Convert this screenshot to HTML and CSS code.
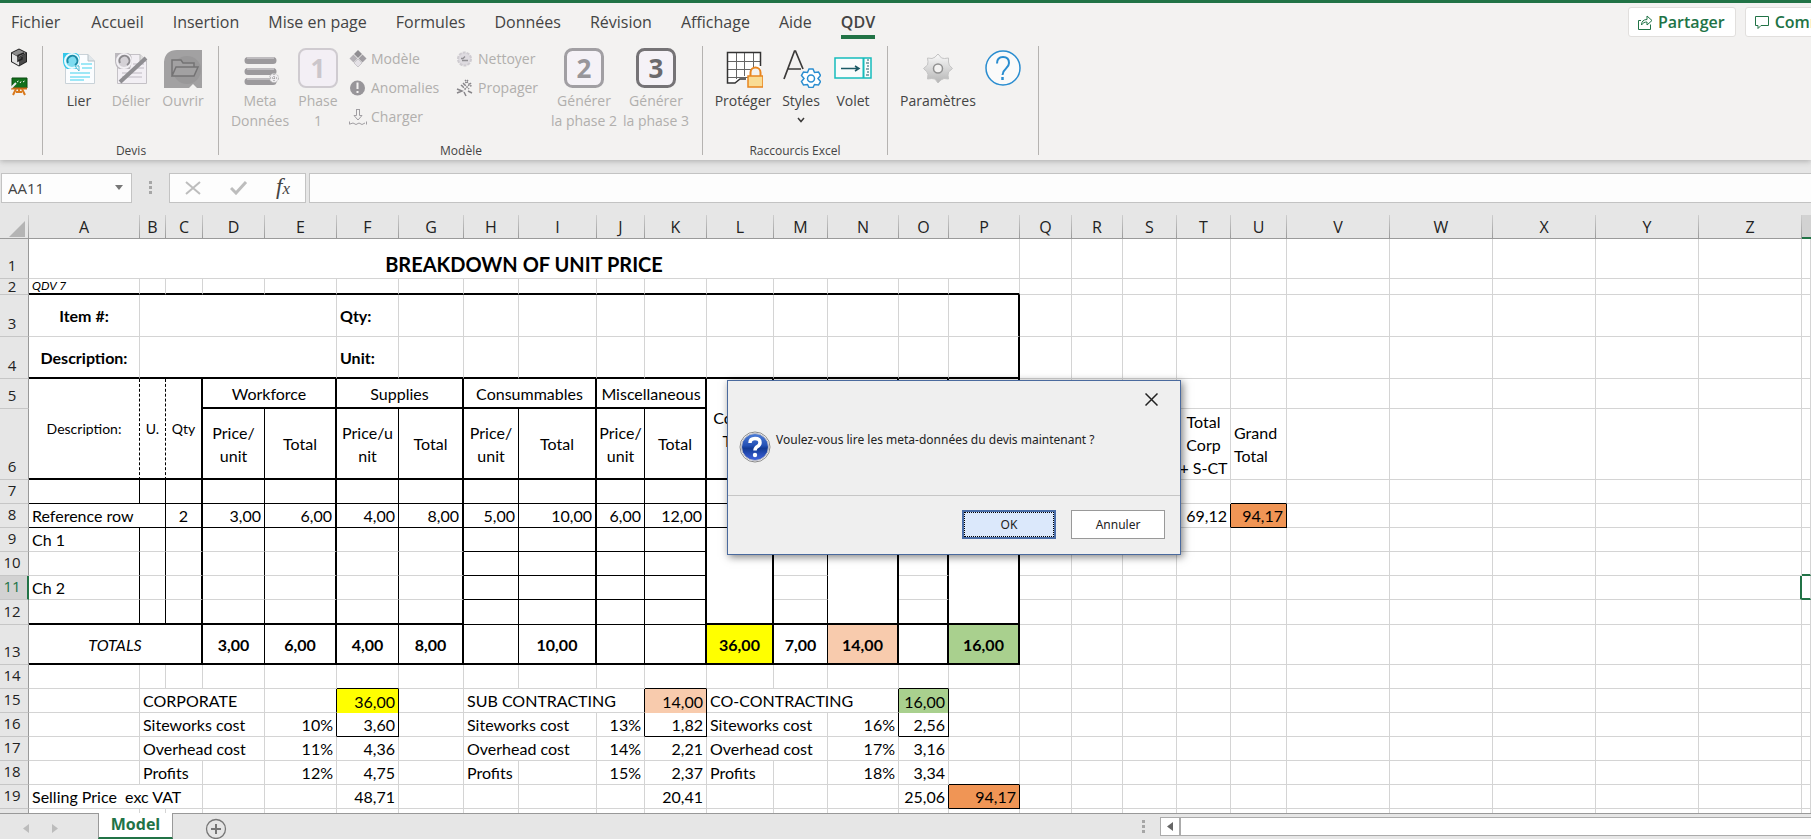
FILE: index.html
```html
<!DOCTYPE html>
<html lang="fr">
  <head>
    <meta charset="UTF-8" />
    <meta name="viewport" content="width=device-width, initial-scale=1.0" />
    <title>QDV - Model</title>
    <link rel="stylesheet" href="styles.css">
  </head>
  <body>
    <header class="ribbon">
      <div class="menu">
        <nav class="tabs">
          <a class="tab tab-file" href="#">Fichier</a>
          <a class="tab" href="#">Accueil</a>
          <a class="tab" href="#">Insertion</a>
          <a class="tab" href="#">Mise en page</a>
          <a class="tab" href="#">Formules</a>
          <a class="tab" href="#">Données</a>
          <a class="tab" href="#">Révision</a>
          <a class="tab" href="#">Affichage</a>
          <a class="tab" href="#">Aide</a>
          <a class="tab active" href="#">QDV</a>
        </nav>
        <div class="share">
          <button type="button" class="share-btn">
            <svg width="16" height="16" viewBox="0 0 16 16" fill="none" stroke="#217346"><path d="M1.500 6.500V15.500H13.500V10.500M1.500 6.500H4M4.500 11C4.500 7.500 6.500 5.500 10 5.500V2L15 6.500L10 11V8C7.500 8 6 8.800 4.500 11Z"/></svg>
            Partager
          </button>
          <button type="button" class="share-btn">
            <svg width="16" height="16" viewBox="0 0 16 16" fill="none" stroke="#217346"><path d="M1.500 2.500H14.500V11.500H7L4 14.500V11.500H1.500Z"/></svg>
            Commentaires
          </button>
        </div>
      </div>

      <div class="groups">
        <div class="group group-quick">
          <button type="button" class="quick" aria-label="Cube">
            <svg width="18" height="19" viewBox="0 0 18 19"><path d="M9 .5L17 4.500V14L9 18.500L1 14V4.500Z" fill="#222"/><path d="M9 1.500L16 5L9 9L2 5Z" fill="#8d8d8d"/><path d="M9 9.500L2 5.500V13.500L9 17.500Z" fill="#e2e2e2"/><path d="M9 9.500L16 5.500V13.500L9 17.500Z" fill="#4a4a4a"/><path d="M14 5L8 7.500V13L12 11V9" fill="none" stroke="#222" stroke-width="1.500"/></svg>
          </button>
          <button type="button" class="quick" aria-label="Tableau">
            <svg width="18" height="19" viewBox="0 0 18 19"><path d="M2 1H17V11H2Z" fill="#12701c" stroke="#0a4a10"/><path d="M1 11.500H17" stroke="#c96a14" stroke-width="2"/><path d="M6 12L3 18M12 12L15 18M9 12V16M6 15H12" stroke="#d9791c" stroke-width="2" fill="none"/><path d="M1 11L6 6" stroke="#eee" stroke-width="2"/><path d="M7 5L8.500 4M10 6L11 4.500M13 5L14.500 4" stroke="#fff"/></svg>
          </button>
        </div>

        <div class="group">
          <div class="items">
            <button type="button" class="big w52">
              <svg width="40" height="40" viewBox="0 0 40 40"><path d="M6.500 6.500H29L35.500 13V35.500H6.500Z" fill="#fbfdff" stroke="#c9d2d8"/><path d="M29 6.500V13H35.500" fill="#dfe6ea" stroke="#b5c0c6"/><path d="M4 5H17Q21 6 21 13L19 21H8Q4 18 4 13Z" fill="#35c8ea"/><circle cx="13" cy="13" r="7" fill="#7edcf0" stroke="#e9fbff" stroke-width="2"/><path d="M9 15a5 5 0 1 1 7 2" fill="none" stroke="#1c8aa5" stroke-width="2"/><path d="M16 18H20V23Z" fill="#fff" stroke="#58bcd2"/><path d="M11 25H31M11 29H31M11 32H25M22 16H33M23 20H33" stroke="#7fe0f4" stroke-width="1.500"/></svg>
              Lier
            </button>
            <button type="button" class="big w52" disabled>
              <svg width="40" height="40" viewBox="0 0 40 40"><path d="M6.500 6.500H29L35.500 13V35.500H6.500Z" fill="#f2eff4" stroke="#c4c1c6"/><path d="M29 6.500V13H35.500" fill="#ddd" stroke="#bbb"/><path d="M4 5H17Q21 6 21 13L19 21H8Q4 18 4 13Z" fill="#bbb8bd"/><circle cx="13" cy="13" r="7" fill="#d4d1d6" stroke="#f2f0f4" stroke-width="2"/><path d="M9 15a5 5 0 1 1 7 2" fill="none" stroke="#8c8a8e" stroke-width="2"/><path d="M11 25H31M11 29H31M22 16H33M23 20H33" stroke="#cfccd2" stroke-width="1.500"/><path d="M9 34L35 10" stroke="#8f8e92" stroke-width="4"/></svg>
              Délier
            </button>
            <button type="button" class="big w52" disabled>
              <svg width="40" height="40" viewBox="0 0 40 40"><path d="M1 14Q2 2 14 2H39V40H34L30 36L26 40H1Z" fill="#a2a1a2"/><circle cx="24" cy="22" r="14" fill="#999899"/><path d="M9 28V12H18L20 15H31V19M9 28L13 19H35L31 28Z" fill="#a2a1a2" stroke="#747374" stroke-width="1.500"/></svg>
              Ouvrir
            </button>
          </div>
          <p class="caption">Devis</p>
        </div>

        <div class="group group-model">
          <div class="items">
            <button type="button" class="big w60" disabled>
              <svg width="40" height="40" viewBox="0 0 40 40"><g stroke="#9c9a9d" stroke-width="7" stroke-linecap="round"><path d="M8 12.500H33M8 23.500H33M8 33.500H33"/></g><g stroke="#bebcbf" stroke-width="2"><path d="M7 10H34M7 21H34M7 31H34"/></g><circle cx="34" cy="30" r="4.500" fill="#f0eef1" stroke="#bbb" stroke-dasharray="2 1"/><path d="M30 30H38M34 26V34" stroke="#888" stroke-dasharray="1 1"/></svg>
              Meta<br>Données
            </button>
            <button type="button" class="big w56" disabled>
              <svg width="40" height="40" viewBox="0 0 40 40"><rect x="1" y="1" width="38" height="38" rx="7" fill="#f3eff5" stroke="#cfcbd0" stroke-width="2"/><text x="20" y="30" class="phase-num" fill="#cbc6cb">1</text></svg>
              Phase<br>1
            </button>
            <div class="smalls smalls-first">
              <button type="button" class="small" disabled>
                <svg width="18" height="18" viewBox="0 0 18 18"><path d="M9 0L13 4L9 8L5 4Z" fill="#908e92"/><path d="M4.500 4.500L8.500 8.500L4.500 12.500L.5 8.500Z" fill="#b4b1b6"/><path d="M13.500 4.500L17.500 8.500L13.500 12.500L9.500 8.500Z" fill="#a09da2"/><path d="M9 9L13 13L9 17L5 13Z" fill="#e4e1e6" stroke="#c9c7cb"/></svg>
                Modèle
              </button>
              <button type="button" class="small" disabled>
                <svg width="18" height="18" viewBox="0 0 18 18"><circle cx="8.500" cy="9" r="7.500" fill="#98969a"/><path d="M8.500 3.500V10M8.500 12V14" stroke="#f3f2f1" stroke-width="2"/></svg>
                Anomalies
              </button>
              <button type="button" class="small" disabled>
                <svg width="18" height="18" viewBox="0 0 18 18" fill="none" stroke="#a09ea2"><path d="M7.500 1V7.500H5L9 12L13 7.500H10.500V1M7.500 1.500H10.500" /><path d="M.5 13.500V16.500M1 16L4 15L7 16.500L10 15L13 16.500L16 15M17.500 13.500V16.500"/></svg>
                Charger
              </button>
            </div>
            <div class="smalls">
              <button type="button" class="small" disabled>
                <svg width="18" height="18" viewBox="0 0 18 18"><circle cx="8.500" cy="9" r="6.500" fill="#dedbe0" stroke="#cfccd1" stroke-width="2" stroke-dasharray="3 1"/><path d="M5 8.500H7L9 6.500M6 10.500H12" stroke="#918f93" stroke-width="1.300" fill="none"/></svg>
                Nettoyer
              </button>
              <button type="button" class="small" disabled>
                <svg width="18" height="18" viewBox="0 0 18 18" fill="none" stroke="#88868a" stroke-width="1.500"><path d="M9 1L16 8M7 4L13 10M5 6L10 11M12 1L6 8M15 4L8 11" stroke-dasharray="1.500 1"/><path d="M1 10L6 12L1 14M8 13L10 17M12 12L16 14"/></svg>
                Propager
              </button>
            </div>
            <button type="button" class="big w72" disabled>
              <svg width="40" height="40" viewBox="0 0 40 40"><rect x="1.500" y="1.500" width="37" height="37" rx="7" fill="#f5f2f7" stroke="#a19fa3" stroke-width="3"/><text x="20" y="30" class="phase-num" fill="#98969a">2</text></svg>
              Générer<br>la phase 2
            </button>
            <button type="button" class="big w72" disabled>
              <svg width="40" height="40" viewBox="0 0 40 40"><rect x="1.500" y="1.500" width="37" height="37" rx="7" fill="#f5f2f7" stroke="#757376" stroke-width="3"/><text x="20" y="30" class="phase-num" fill="#6c6a6d">3</text></svg>
              Générer<br>la phase 3
            </button>
          </div>
          <p class="caption">Modèle</p>
        </div>

        <div class="group group-excel">
          <div class="items">
            <button type="button" class="big w60">
              <svg width="40" height="40" viewBox="0 0 40 40"><path d="M4.500 4.500H37.500V32H22L18 31.500L13 35.500H4.500Z" fill="#fff"/><path d="M13.500 4V31M21.500 4V28M30.500 4V20M4 13.500H37M4 21.500H28M4 29.500H25" stroke="#666"/><path d="M37.500 18V4.500H4.500V35H12L17 31H23" fill="none" stroke="#333" stroke-width="1.500"/><path d="M27.500 28V24.500a5 5 0 0 1 10 0V28" fill="#f3f2f1" stroke="#e8851f" stroke-width="2"/><rect x="25" y="28" width="15" height="11" fill="#f9dc94" stroke="#e8851f" stroke-width="1.500"/></svg>
              Protéger
            </button>
            <button type="button" class="big w56">
              <svg width="40" height="40" viewBox="0 0 40 40" fill="none"><path d="M3 31L13.500 3H14.500L22 21M7 21H20" stroke="#3b3a39" stroke-width="1.700"/><path d="M28 21L32 21L33.500 24.500L37.500 24L39.500 27.500L37 30.500L39.500 33.500L37.500 37L33.500 36.500L32 39.500H28L26.500 36.500L22.500 37L20.500 33.500L23 30.500L20.500 27.500L22.500 24L26.500 24.500Z" fill="#fff" stroke="#2a8dd0" stroke-width="1.500"/><circle cx="30" cy="30.500" r="3.500" stroke="#2a8dd0" stroke-width="1.500"/></svg>
              Styles
              <svg class="chevron" width="8" height="6" viewBox="0 0 8 6" fill="none" stroke="#3b3a39" stroke-width="1.500"><path d="M1 1L4 4.500L7 1"/></svg>
            </button>
            <button type="button" class="big w48">
              <svg width="40" height="40" viewBox="0 0 40 40" fill="none"><rect x="2" y="10" width="36" height="20" fill="#fafcfc" stroke="#16bcbc" stroke-width="1.500"/><path d="M30.500 10V30" stroke="#16bcbc" stroke-width="2"/><path d="M34 12H36M33 15H36M34 18H36M33 21H36M34 24H36M33 27H36" stroke="#1b5a66"/><path d="M8 20.500H25M22 18L26 20.500L22 23" stroke="#1b5a66" stroke-width="1.500"/></svg>
              Volet
            </button>
          </div>
          <p class="caption">Raccourcis Excel</p>
        </div>

        <div class="group group-last">
          <div class="items">
            <button type="button" class="big w76">
              <svg width="40" height="40" viewBox="0 0 40 40"><defs><linearGradient id="gear" x1="0" y1="0" x2="0" y2="1"><stop offset="0" stop-color="#fafafa"/><stop offset="1" stop-color="#b5b5b5"/></linearGradient></defs><path d="M20 6L23.500 10Q26 11 30.500 10L30.500 14Q30 17 34.500 20.500L30.500 24Q29.500 27 30.500 31L26 30.500Q23 31 20 35L17 31Q14 30 9.500 31L10 26.500Q10 24 5.500 20.500L9.500 17Q10.500 14 9.500 10L14 10.500Q17 10 20 6Z" fill="url(#gear)" stroke="#c4c4c4"/><circle cx="20" cy="20.500" r="4.500" fill="#f3f2f1" stroke="#909090" stroke-width="1.500"/></svg>
              Paramètres
            </button>
            <button type="button" class="big w54" aria-label="Aide QDV">
              <svg width="40" height="40" viewBox="0 0 40 40" fill="none" stroke="#2a8dd0"><circle cx="20" cy="20" r="17" fill="#fafafa" stroke-width="1.500"/><path d="M14 15.500Q14 9 20 9T26 15Q26 18 23 20.500T19.500 27" stroke-width="2"/><path d="M19.500 29V32" stroke-width="2.500"/></svg>
            </button>
          </div>
        </div>
      </div>
    </header>

    <div class="formula-bar">
      <label class="name-box">
        <input type="text" value="AA11" aria-label="Zone Nom" />
        <svg width="8" height="5" viewBox="0 0 8 5"><path d="M0 0H8L4 5Z" fill="#777"/></svg>
      </label>
      <span class="dots"></span>
      <div class="formula-actions">
        <button type="button" aria-label="Annuler la saisie"><svg width="16" height="14" viewBox="0 0 16 14" fill="none" stroke="#bdbdbd" stroke-width="2"><path d="M1 1L15 13M15 1L1 13"/></svg></button>
        <button type="button" aria-label="Valider la saisie"><svg width="18" height="14" viewBox="0 0 18 14" fill="none" stroke="#bdbdbd" stroke-width="3"><path d="M1 7L6 12L16 1"/></svg></button>
        <button type="button" class="fx">f<small>x</small></button>
      </div>
      <input class="formula" type="text" aria-label="Formule" />
    </div>

    <main class="sheet">
      <table>
        <colgroup>
          <col class="c29"><col class="c111"><col class="c26"><col class="c37"><col class="c62"><col class="c72"><col class="c62"><col class="c65"><col class="c55">
          <col class="c78"><col class="c48"><col class="c62"><col class="c67"><col class="c54"><col class="c71"><col class="c50"><col class="c71"><col class="c52">
          <col class="c51"><col class="c54"><col class="c54"><col class="c56"><col class="c103"><col class="c103"><col class="c103"><col class="c103"><col class="c103"><col>
        </colgroup>
        <thead>
          <tr>
            <th class="corner"><svg width="16" height="16" viewBox="0 0 16 16"><path d="M16 0V16H0Z" fill="#b4b4b4"/></svg></th>
            <th>A</th><th>B</th><th>C</th><th>D</th><th>E</th><th>F</th><th>G</th><th>H</th><th>I</th><th>J</th><th>K</th><th>L</th><th>M</th>
            <th>N</th><th>O</th><th>P</th><th>Q</th><th>R</th><th>S</th><th>T</th><th>U</th><th>V</th><th>W</th><th>X</th><th>Y</th><th>Z</th><th class="col-on"></th>
          </tr>
        </thead>
        <tbody>
          <tr class="h40">
            <th>1</th>
            <td class="title" colspan="16">BREAKDOWN OF UNIT PRICE</td>
            <td></td><td></td><td></td><td></td><td></td><td></td><td></td><td></td><td></td><td></td><td></td>
          </tr>
          <tr class="h16">
            <th class="low">2</th>
            <td class="tiny bt">QDV 7</td><td class="bt"></td><td class="bt"></td><td class="bt"></td><td class="bt"></td><td class="bt"></td><td class="bt"></td><td class="bt"></td>
            <td class="bt"></td><td class="bt"></td><td class="bt"></td><td class="bt"></td><td class="bt"></td><td class="bt"></td><td class="bt"></td><td class="bt"></td>
            <td></td><td></td><td></td><td></td><td></td><td></td><td></td><td></td><td></td><td></td><td></td>
          </tr>
          <tr class="h42 strong">
            <th>3</th>
            <td class="mid">Item #:</td><td colspan="4"></td><td>Qty:</td><td></td><td></td><td></td><td></td><td></td><td></td><td></td><td></td><td></td><td class="rt"></td>
            <td></td><td></td><td></td><td></td><td></td><td></td><td></td><td></td><td></td><td></td><td></td>
          </tr>
          <tr class="h42 strong">
            <th>4</th>
            <td class="mid bt">Description:</td><td class="bt" colspan="4"></td><td class="bt">Unit:</td><td class="bt"></td><td class="bt"></td><td class="bt"></td><td class="bt"></td>
            <td class="bt"></td><td class="bt"></td><td class="bt"></td><td class="bt"></td><td class="bt"></td><td class="bt rt"></td>
            <td></td><td></td><td></td><td></td><td></td><td></td><td></td><td></td><td></td><td></td><td></td>
          </tr>
          <tr class="h30">
            <th>5</th>
            <td class="mid note rd bt" rowspan="2">Description:</td><td class="mid note rd bt" rowspan="2">U.</td><td class="mid note rt bt" rowspan="2">Qty</td>
            <td class="mid rt bt" colspan="2">Workforce</td><td class="mid rt bt" colspan="2">Supplies</td><td class="mid rt bt" colspan="2">Consummables</td><td class="mid tight rt bt" colspan="2">Miscellaneous</td>
            <td class="mid rt bt" rowspan="2">Corpor.<br>Total</td><td class="r bt" rowspan="2"></td><td class="rt bt" rowspan="2"></td><td class="rt bt" rowspan="2"></td><td class="rt bt" rowspan="2"></td>
            <td></td><td></td><td></td><td></td><td></td><td></td><td></td><td></td><td></td><td></td><td></td>
          </tr>
          <tr class="h71">
            <th>6</th>
            <td class="mid r bt">Price/<br>unit</td><td class="mid rt bt">Total</td><td class="mid r bt">Price/u<br>nit</td><td class="mid rt bt">Total</td>
            <td class="mid r bt">Price/<br>unit</td><td class="mid rt bt">Total</td><td class="mid tight r bt">Price/<br>unit</td><td class="mid rt bt">Total</td>
            <td></td><td></td><td></td><td class="mid tight">Total<br>Corp<br>+ S-CT</td><td>Grand<br>Total</td><td></td><td></td><td></td><td></td><td></td><td></td>
          </tr>
          <tr>
            <th>7</th>
            <td class="r b"></td><td class="r b"></td><td class="rt b"></td><td class="r b"></td><td class="rt b"></td><td class="r b"></td><td class="rt b"></td><td class="r b"></td>
            <td class="rt b"></td><td class="r b"></td><td class="rt b"></td><td class="rt b"></td><td class="r b"></td><td class="rt b"></td><td class="rt b"></td><td class="rt b"></td>
            <td></td><td></td><td></td><td></td><td class="b"></td><td></td><td></td><td></td><td></td><td></td><td></td>
          </tr>
          <tr>
            <th>8</th>
            <td class="r b" colspan="2">Reference row</td><td class="mid rt b">2</td><td class="num r b">3,00</td><td class="num rt b">6,00</td><td class="num r b">4,00</td><td class="num rt b">8,00</td><td class="num r b">5,00</td>
            <td class="num rt b">10,00</td><td class="num r b">6,00</td><td class="num rt b">12,00</td><td class="rt b"></td><td class="r b"></td><td class="rt b"></td><td class="rt b"></td><td class="rt b"></td>
            <td></td><td></td><td></td><td class="num r">69,12</td><td class="num orange r b">94,17</td><td></td><td></td><td></td><td></td><td></td><td></td>
          </tr>
          <tr>
            <th>9</th>
            <td class="r">Ch 1</td><td class="r"></td><td class="rt"></td><td class="r"></td><td class="rt"></td><td class="r"></td><td class="rt"></td><td class="r b"></td>
            <td class="rt b"></td><td class="r b"></td><td class="rt b"></td><td class="rt bt" rowspan="4"></td><td class="r"></td><td class="rt bt" rowspan="4"></td><td class="rt"></td><td class="rt bt" rowspan="4"></td>
            <td></td><td></td><td></td><td></td><td></td><td></td><td></td><td></td><td></td><td></td><td></td>
          </tr>
          <tr>
            <th>10</th>
            <td class="r"></td><td class="r"></td><td class="rt"></td><td class="r"></td><td class="rt"></td><td class="r"></td><td class="rt"></td><td class="r b"></td>
            <td class="rt b"></td><td class="r b"></td><td class="rt b"></td><td class="r"></td><td class="rt"></td>
            <td></td><td></td><td></td><td></td><td></td><td></td><td></td><td></td><td></td><td></td><td class="above-active"></td>
          </tr>
          <tr>
            <th class="row-on">11</th>
            <td class="r">Ch 2</td><td class="r"></td><td class="rt"></td><td class="r"></td><td class="rt"></td><td class="r"></td><td class="rt"></td><td class="r b"></td>
            <td class="rt b"></td><td class="r b"></td><td class="rt b"></td><td class="r"></td><td class="rt"></td>
            <td></td><td></td><td></td><td></td><td></td><td></td><td></td><td></td><td></td><td class="before-active"></td><td class="active-cell"></td>
          </tr>
          <tr class="h25">
            <th>12</th>
            <td class="r bt"></td><td class="r bt"></td><td class="rt bt"></td><td class="r bt"></td><td class="rt bt"></td><td class="r bt"></td><td class="rt bt"></td><td class="r b"></td>
            <td class="rt b"></td><td class="r b"></td><td class="rt b"></td><td class="r bt"></td><td class="rt bt"></td>
            <td></td><td></td><td></td><td></td><td></td><td></td><td></td><td></td><td></td><td></td><td></td>
          </tr>
          <tr class="h40 strong">
            <th>13</th>
            <td class="mid totals rt bt" colspan="3">TOTALS</td><td class="mid r bt">3,00</td><td class="mid rt bt">6,00</td><td class="mid r bt">4,00</td><td class="mid rt bt">8,00</td><td class="r bt"></td>
            <td class="mid rt bt">10,00</td><td class="r bt"></td><td class="rt bt"></td><td class="mid yellow rt bt">36,00</td><td class="mid r bt">7,00</td><td class="mid salmon rt bt">14,00</td><td class="rt bt"></td><td class="mid green rt bt">16,00</td>
            <td></td><td></td><td></td><td></td><td></td><td></td><td></td><td></td><td></td><td></td><td></td>
          </tr>
          <tr>
            <th>14</th>
            <td></td><td></td><td></td><td></td><td></td><td class="b"></td><td></td><td></td><td></td><td></td><td class="b"></td><td></td><td></td><td></td><td class="b"></td><td></td>
            <td></td><td></td><td></td><td></td><td></td><td></td><td></td><td></td><td></td><td></td><td></td>
          </tr>
          <tr>
            <th>15</th>
            <td></td><td colspan="3">CORPORATE</td><td class="r"></td><td class="num yellow r bn">36,00</td><td></td>
            <td class="r" colspan="3">SUB CONTRACTING</td><td class="num salmon r bn">14,00</td>
            <td class="r" colspan="3">CO-CONTRACTING</td><td class="num green r bn">16,00</td><td></td>
            <td></td><td></td><td></td><td></td><td></td><td></td><td></td><td></td><td></td><td></td><td></td>
          </tr>
          <tr>
            <th>16</th>
            <td></td><td colspan="3">Siteworks cost</td><td class="num r">10%</td><td class="num r b">3,60</td><td></td>
            <td colspan="2">Siteworks cost</td><td class="num r">13%</td><td class="num r b">1,82</td>
            <td colspan="2">Siteworks cost</td><td class="num r">16%</td><td class="num r b">2,56</td><td></td>
            <td></td><td></td><td></td><td></td><td></td><td></td><td></td><td></td><td></td><td></td><td></td>
          </tr>
          <tr>
            <th>17</th>
            <td></td><td colspan="3">Overhead cost</td><td class="num">11%</td><td class="num">4,36</td><td></td>
            <td colspan="2">Overhead cost</td><td class="num">14%</td><td class="num">2,21</td>
            <td colspan="2">Overhead cost</td><td class="num">17%</td><td class="num">3,16</td><td></td>
            <td></td><td></td><td></td><td></td><td></td><td></td><td></td><td></td><td></td><td></td><td></td>
          </tr>
          <tr>
            <th>18</th>
            <td></td><td colspan="2">Profits</td><td></td><td class="num">12%</td><td class="num">4,75</td><td></td>
            <td>Profits</td><td></td><td class="num">15%</td><td class="num">2,37</td>
            <td>Profits</td><td></td><td class="num">18%</td><td class="num">3,34</td><td class="b"></td>
            <td></td><td></td><td></td><td></td><td></td><td></td><td></td><td></td><td></td><td></td><td></td>
          </tr>
          <tr>
            <th>19</th>
            <td class="keep" colspan="3">Selling Price  exc VAT</td><td></td><td></td><td class="num">48,71</td><td></td><td></td><td></td><td></td><td class="num">20,41</td>
            <td></td><td></td><td></td><td class="num r">25,06</td><td class="num orange r b">94,17</td>
            <td></td><td></td><td></td><td></td><td></td><td></td><td></td><td></td><td></td><td></td><td></td>
          </tr>
          <tr>
            <th></th>
            <td></td><td></td><td></td><td></td><td></td><td></td><td></td><td></td><td></td><td></td><td></td><td></td><td></td><td></td><td></td><td></td>
            <td></td><td></td><td></td><td></td><td></td><td></td><td></td><td></td><td></td><td></td><td></td>
          </tr>
        </tbody>
      </table>
    </main>

    <footer class="sheet-bar">
      <div class="sheet-nav">
        <button type="button" aria-label="Feuille précédente"><svg width="6" height="9" viewBox="0 0 6 9"><path d="M6 0V9L0 4.500Z" fill="#bcbcbc"/></svg></button>
        <button type="button" aria-label="Feuille suivante"><svg width="6" height="9" viewBox="0 0 6 9"><path d="M0 0V9L6 4.500Z" fill="#bcbcbc"/></svg></button>
      </div>
      <a class="sheet-tab" href="#">Model</a>
      <button type="button" class="add-sheet" aria-label="Nouvelle feuille"><svg width="22" height="22" viewBox="0 0 22 22" fill="none" stroke="#777"><circle cx="11" cy="11" r="9.500" stroke-width="1.300"/><path d="M6 11H16M11 6V16" stroke-width="2"/></svg></button>
      <div class="scroll">
        <span class="dots"></span>
        <button type="button" class="scroll-left" aria-label="Défiler à gauche"><svg width="6" height="9" viewBox="0 0 6 9"><path d="M6 0V9L0 4.500Z" fill="#666"/></svg></button>
        <div class="track"></div>
      </div>
    </footer>

    <div class="dialog" role="dialog" aria-labelledby="question">
      <button type="button" class="close" aria-label="Fermer"><svg width="13" height="13" viewBox="0 0 13 13" fill="none" stroke="#222" stroke-width="1.500"><path d="M.5 .5L12.500 12.500M12.500 .5L.5 12.500"/></svg></button>
      <div class="dialog-body">
        <svg width="32" height="32" viewBox="0 0 32 32"><defs><linearGradient id="ball" x1="0" y1="0" x2="0" y2="1"><stop offset="0" stop-color="#4f7fd9"/><stop offset=".45" stop-color="#2350b4"/><stop offset=".55" stop-color="#123a94"/><stop offset="1" stop-color="#4164e0"/></linearGradient></defs><circle cx="16" cy="16" r="15" fill="#fafafa" stroke="#8a8a8a"/><circle cx="16" cy="16" r="13.500" fill="url(#ball)" stroke="#bcbcc4"/><path d="M11 12Q11 7.500 16 7.500T21 11.500Q21 14 18.500 15.500T16 19.500" fill="none" stroke="#fff" stroke-width="3.500"/><circle cx="16" cy="24" r="2.200" fill="#fff"/></svg>
        <p id="question">Voulez-vous lire les meta-données du devis maintenant ?</p>
      </div>
      <div class="dialog-actions">
        <button type="button" class="dialog-btn primary"><span>OK</span></button>
        <button type="button" class="dialog-btn">Annuler</button>
      </div>
    </div>
  </body>
</html>
```

FILE: styles.css
```css
* {
  box-sizing: border-box;
}
body {
  margin: 0;
  height: 100vh;
  display: flex;
  flex-direction: column;
  overflow: hidden;
  background: #e6e6e6;
  color: #000;
  font-family: "Open Sans", "Noto Sans", sans-serif;
}
button,
input {
  font-family: inherit;
}
button {
  padding: 0;
  border: none;
  background: none;
}
p {
  margin: 0;
}
svg {
  display: block;
  flex-shrink: 0;
}

/* ribbon */
.ribbon {
  position: relative;
  height: 160px;
  flex-shrink: 0;
  border-top: 3px solid #217346;
  background: #f3f2f1;
  box-shadow: 0 1px 6px #a8a8a8;
}
.menu {
  display: flex;
  justify-content: space-between;
  height: 43px;
}
.tabs {
  display: flex;
  gap: 29px;
  padding-left: 11px;
}
.tab {
  height: 36px;
  line-height: 38px;
  font-size: 16px;
  color: #444;
  text-decoration: none;
  white-space: nowrap;
}
.tab-file {
  margin-right: 2px;
}
.tab.active {
  border-bottom: 4px solid #217346;
  font-weight: 600;
}
.share {
  display: flex;
  gap: 9px;
  width: 183px;
  padding-top: 4px;
  overflow: hidden;
}
.share-btn {
  display: flex;
  flex-shrink: 0;
  align-items: center;
  gap: 5px;
  height: 30px;
  padding: 0 10px 0 8px;
  border: 1px solid #e1dfdd;
  border-radius: 3px;
  background: #fff;
  color: #217346;
  font-size: 16px;
  font-weight: 600;
}
.groups {
  display: flex;
}
.group {
  height: 109px;
  display: flex;
  flex-direction: column;
  justify-content: space-between;
  padding: 0 10px;
  border-right: 1px solid #b5b3b1;
}
.group:nth-child(2) {
  padding: 0 9px 0 10px;
}
.group-quick {
  width: 43px;
  justify-content: flex-start;
  gap: 10px;
  padding-top: 2px;
}
.group-model {
  padding: 0 10px 0 11px;
}
.group-last {
  padding: 0 8px 0 12px;
}
.quick {
  width: 18px;
}
.items {
  display: flex;
}
.big {
  display: flex;
  flex-direction: column;
  align-items: center;
  padding-top: 2px;
  font-size: 14px;
  line-height: 20px;
  color: #444;
  white-space: nowrap;
}
.big > svg:first-child {
  margin-bottom: 3px;
}
.big .chevron {
  margin-top: 6px;
}
.big:disabled,
.small:disabled {
  color: #b1afad;
}
.w48 { width: 48px; }
.w52 { width: 52px; }
.w54 { width: 54px; }
.w56 { width: 56px; }
.w60 { width: 60px; }
.w72 { width: 72px; }
.w76 { width: 76px; }
.phase-num {
  font-size: 26px;
  font-weight: bold;
  text-anchor: middle;
}
.smalls {
  display: flex;
  flex-direction: column;
  gap: 9px;
  width: 95px;
  padding: 3px 0 0 3px;
}
.smalls-first {
  width: 107px;
}
.small {
  display: flex;
  align-items: center;
  gap: 4px;
  font-size: 14px;
  line-height: 20px;
}
.caption {
  text-align: center;
  font-size: 12px;
  line-height: 8px;
  color: #444;
}

/* formula bar */
.formula-bar {
  display: flex;
  align-items: center;
  height: 55px;
  flex-shrink: 0;
  padding: 0 0 0 1px;
}
.name-box,
.formula-actions,
.formula {
  height: 30px;
  border: 1px solid #c3c3c3;
  background: #fdfdfd;
}
.name-box {
  display: flex;
  align-items: center;
  width: 131px;
  padding: 0 8px 0 6px;
}
.name-box input {
  width: 100%;
  padding: 0;
  border: none;
  background: none;
  color: #444;
  font-size: 15px;
}
.dots {
  width: 3px;
  height: 13px;
  background: repeating-linear-gradient(#a6a6a6 0 3px, transparent 3px 5px);
}
.formula-bar .dots {
  margin: 0 17px;
}
.formula-actions {
  display: flex;
  justify-content: space-between;
  align-items: center;
  width: 137px;
  padding: 0 15px;
}
.fx {
  font: italic 23px "Liberation Serif", serif;
  line-height: 26px;
  color: #444;
}
.fx small {
  font-size: 17px;
}
.formula {
  flex: 1;
  margin-left: 3px;
  border-right: none;
}

/* grid */
.sheet {
  flex: 1;
  min-height: 0;
  overflow: hidden;
  background: #fff;
}
table {
  width: 100%;
  table-layout: fixed;
  border-collapse: separate;
  border-spacing: 0;
  font-family: Lato, sans-serif;
  font-size: 16px;
  line-height: 23px;
}
tr {
  height: 24px;
}
.h16 { height: 16px; }
.h25 { height: 25px; }
.h30 { height: 30px; }
.h40 { height: 40px; }
.h42 { height: 42px; }
.h71 { height: 71px; }
.c26 { width: 26px; }
.c29 { width: 29px; }
.c37 { width: 37px; }
.c48 { width: 48px; }
.c50 { width: 50px; }
.c51 { width: 51px; }
.c52 { width: 52px; }
.c54 { width: 54px; }
.c55 { width: 55px; }
.c56 { width: 56px; }
.c62 { width: 62px; }
.c65 { width: 65px; }
.c67 { width: 67px; }
.c71 { width: 71px; }
.c72 { width: 72px; }
.c78 { width: 78px; }
.c103 { width: 103px; }
.c111 { width: 111px; }
th {
  padding: 0;
  background: #e6e6e6;
  font-family: "Open Sans", "Noto Sans", sans-serif;
  font-weight: normal;
  color: #222;
}
thead th {
  padding-top: 2px;
  border-right: 1px solid;
  border-image: linear-gradient(#d0d0d0, #999) 1;
  border-bottom: 1px solid #999;
  line-height: 21px;
}
thead .corner svg {
  margin: 2px 0 0 9px;
}
thead .col-on {
  border-image: none;
  border-right: none;
  border-bottom: 2px solid #217346;
  background: #d2d2d2;
}
tbody th {
  padding: 0 4px 2px 0;
  border-right: 1px solid #999;
  border-bottom: 1px solid #c6c6c6;
  vertical-align: bottom;
  font-size: 15px;
  line-height: 21px;
}
tbody .low {
  line-height: 12px;
}
tbody .row-on {
  padding-right: 3px;
  border-right: 2px solid #217346;
  background: #d2d2d2;
  color: #217346;
}
td {
  padding: 0 3px;
  border-right: 1px solid #d4d4d4;
  border-bottom: 1px solid #d4d4d4;
  white-space: nowrap;
}
.mid {
  text-align: center;
}
.num {
  text-align: right;
}
.tight {
  padding: 0;
}
.keep {
  white-space: pre;
}
.strong td {
  font-weight: bold;
}
td.title {
  padding-top: 11px;
  text-align: center;
  font-size: 20px;
  font-weight: bold;
}
.tiny {
  font-size: 12px;
  font-style: italic;
  line-height: 12px;
}
.note {
  font-size: 14px;
}
.strong .totals {
  font-weight: normal;
  font-style: italic;
}
.yellow { background: #ffff00; }
.salmon { background: #f8cbad; }
.green { background: #a9d08e; }
.orange { background: #f09555; }
.r { border-right: 1px solid #000; }
.rt { border-right: 2px solid #000; }
.rd { border-right: 1px dashed #000; }
.b { border-bottom: 1px solid #000; }
.bt { border-bottom: 2px solid #000; }
.bn { border-bottom: none; }
.before-active { border-right: 2px solid #217346; }
.above-active,
.active-cell { border-bottom: 2px solid #217346; }

/* sheet tabs */
.sheet-bar {
  display: flex;
  align-items: center;
  height: 26px;
  flex-shrink: 0;
  border-top: 1px solid #999;
}
.sheet-nav {
  display: flex;
  gap: 23px;
  width: 98px;
  padding: 4px 0 0 23px;
}
.sheet-tab {
  width: 75px;
  height: 26px;
  margin-top: -1px;
  border: 1px solid #999;
  border-width: 0 1px 2px;
  border-bottom-color: #217346;
  background: #fff;
  color: #217346;
  font-size: 16px;
  font-weight: bold;
  line-height: 22px;
  text-align: center;
  text-decoration: none;
}
.add-sheet {
  margin: 4px 0 0 32px;
}
.scroll {
  display: flex;
  align-items: center;
  width: 669px;
  height: 19px;
  margin-left: auto;
}
.scroll-left {
  display: flex;
  justify-content: center;
  align-items: center;
  width: 20px;
  height: 19px;
  margin-left: 15px;
  border: 1px solid #ababab;
  background: #fff;
}
.track {
  flex: 1;
  height: 19px;
  border: 1px solid #ababab;
  border-right: none;
  background: #fff;
}

/* message box */
.dialog {
  position: absolute;
  left: 727px;
  top: 380px;
  width: 454px;
  display: flex;
  flex-direction: column;
  border: 1px solid #4a6a9e;
  background: #efefef;
  box-shadow: 2px 2px 8px rgba(0, 0, 0, 0.5);
  color: #222;
  font-family: "Noto Sans", "Open Sans", sans-serif;
  font-size: 12px;
}
.close {
  align-self: flex-end;
  margin: 12px 22px 0 0;
}
.dialog-body {
  display: flex;
  gap: 5px;
  height: 89px;
  padding: 25px 0 0 11px;
}
#question {
  line-height: 18px;
}
.dialog-actions {
  display: flex;
  justify-content: flex-end;
  gap: 15px;
  padding: 14px 15px 15px;
  border-top: 1px solid #c6c6c6;
}
.dialog-btn {
  width: 94px;
  height: 29px;
  border: 1px solid #999;
  background: #fff;
  color: #222;
  font-size: 12px;
}
.primary {
  display: flex;
  border: 2px solid #4a6da7;
  background: #dbe8fb;
}
.primary span {
  flex: 1;
  border: 1px dotted #000;
  line-height: 23px;
}
```
